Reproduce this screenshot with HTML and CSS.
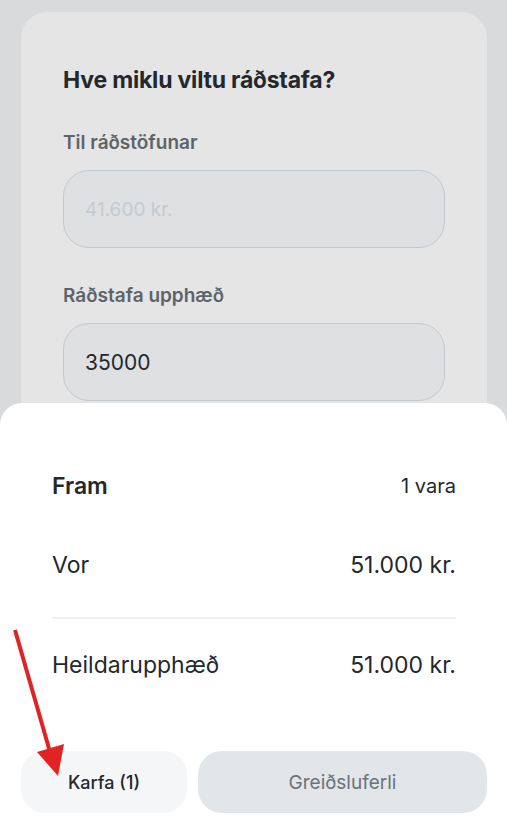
FILE: index.html
```html
<!DOCTYPE html>
<html lang="is">

<head>
    <meta charset="UTF-8">
    <meta name="viewport" content="width=device-width, initial-scale=1.0">
    <title>Ráðstafa</title>
    <link rel="stylesheet" href="styles.css">
</head>

<body>
    <div class="screen">

        <div class="card">
            <h2 class="card-title">Hve miklu viltu ráðstafa?</h2>

            <label class="field-label" for="available">Til ráðstöfunar</label>
            <div class="field field-disabled" id="available">41.600 kr.</div>

            <label class="field-label" for="amount">Ráðstafa upphæð</label>
            <div class="field" id="amount">35000</div>
        </div>

        <div class="sheet">
            <div class="row row-head">
                <span class="row-name">Fram</span>
                <span class="row-count">1 vara</span>
            </div>

            <div class="row row-item">
                <span>Vor</span>
                <span>51.000 kr.</span>
            </div>

            <hr class="divider">

            <div class="row row-total">
                <span>Heildarupphæð</span>
                <span>51.000 kr.</span>
            </div>

            <div class="actions">
                <button class="btn btn-cart">Karfa (1)</button>
                <button class="btn btn-checkout" disabled>Greiðsluferli</button>
            </div>
        </div>

        <!-- annotation arrow -->
        <svg class="arrow" width="507" height="836" viewBox="0 0 507 836">
            <line x1="15" y1="630" x2="50" y2="752" stroke="#e02424" stroke-width="4" />
            <polygon points="58,776 37,752 64,744" fill="#e02424" />
        </svg>

    </div>
</body>

</html>
```

FILE: styles.css
```css
body {
    font-family: Inter, "Noto Sans", sans-serif;
    margin: 0;
    background-color: #d9dadc;
    color: #22282d;
}

.screen {
    height: 836px;
    overflow: hidden;
    position: relative;
}

.card {
    margin: 12px 20px 0 21px;
    padding: 54px 42px 60px 42px;
    background-color: #e5e5e5;
    border-radius: 26px;
}

.card-title {
    margin: 0;
    font-size: 23px;
    line-height: 28px;
    font-weight: 700;
    letter-spacing: -0.2px;
}

.field-label {
    display: block;
    margin-top: 36px;
    font-size: 19px;
    line-height: 24px;
    font-weight: 600;
    color: #5c6469;
}

.card-title + .field-label {
    margin-top: 37px;
}

.field {
    margin-top: 15px;
    height: 76px;
    padding: 0 21px;
    display: flex;
    align-items: center;
    background-color: #dfe0e2;
    border: 1px solid #c3c9d0;
    border-radius: 26px;
    font-size: 21px;
    color: #22282d;
}

.field-disabled {
    font-size: 19px;
    color: #c4cad1;
}

.sheet {
    position: absolute;
    left: 0;
    right: 0;
    bottom: 0;
    height: 433px;
    box-sizing: border-box;
    padding: 66px 51px 0 52px;
    background-color: white;
    border-radius: 22px 22px 0 0;
}

.row {
    display: flex;
    justify-content: space-between;
    align-items: center;
    height: 34px;
    font-size: 23px;
}

.row-name {
    font-weight: 600;
}

.row-count {
    font-size: 20px;
}

.row-item {
    margin-top: 45px;
}

.divider {
    margin: 35px 0 0 0;
    border: none;
    height: 2px;
    background-color: #eef0f3;
}

.row-total {
    margin-top: 29px;
}

.actions {
    display: flex;
    gap: 11px;
    margin: 69px -31px 0 -31px;
}

.btn {
    height: 62px;
    border: none;
    border-radius: 24px;
    font-family: inherit;
    font-size: 19px;
    cursor: pointer;
}

.btn-cart {
    width: 166px;
    background-color: #f5f6f8;
    color: #22282d;
    font-size: 18px;
    font-weight: 500;
}

.btn-checkout {
    flex: 1;
    background-color: #e2e6e9;
    color: #6b7279;
}

.arrow {
    position: absolute;
    top: 0;
    left: 0;
    pointer-events: none;
}
```
